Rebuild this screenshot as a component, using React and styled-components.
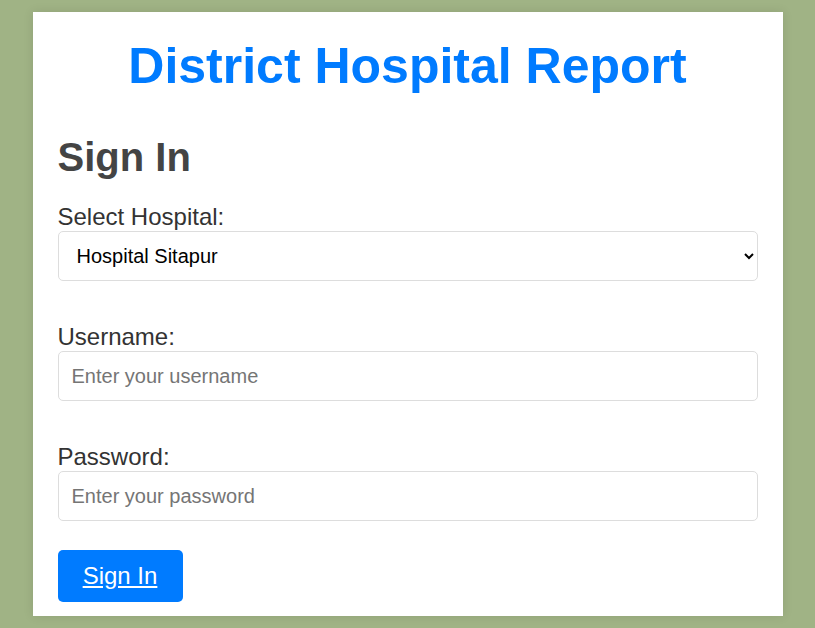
import React, { useState } from "react";
import styled, { createGlobalStyle } from "styled-components";

const GlobalStyle = createGlobalStyle`
  html, body {
    margin: 0;
    padding: 0;
    background-color: #a0b385;
    font-family: "Liberation Sans", Arial, sans-serif;
  }
`;

const Card = styled.div`
  width: 750px;
  box-sizing: border-box;
  margin: 12px auto;
  padding: 25px 25px 14px;
  background-color: #fff;
  box-shadow: 0 0 10px rgba(0, 0, 0, 0.1);
`;

const Title = styled.h1`
  margin: 0;
  text-align: center;
  color: #007bff;
  font-size: 50px;
  font-weight: bold;
  line-height: 58px;
`;

const Heading = styled.h2`
  margin: 39px 0 23px;
  color: #444;
  font-size: 40px;
  font-weight: bold;
  line-height: 46px;
`;

const Form = styled.form`
  display: flex;
  flex-direction: column;
`;

const Field = styled.div`
  display: flex;
  flex-direction: column;
  margin-bottom: 42px;
`;

const Label = styled.label`
  color: #333;
  font-size: 24px;
  line-height: 28px;
`;

const Select = styled.select`
  height: 50px;
  box-sizing: border-box;
  padding: 0 14px;
  border: 1px solid #ddd;
  border-radius: 5px;
  background: #fff;
  font-family: "Liberation Sans", Arial, sans-serif;
  font-size: 20px;
  color: #000;
`;

const Input = styled.input`
  height: 50px;
  box-sizing: border-box;
  padding: 0 13px;
  border: 1px solid #ddd;
  border-radius: 5px;
  font-family: "Liberation Sans", Arial, sans-serif;
  font-size: 20px;
  color: #000;
  &::placeholder {
    color: #757575;
  }
`;

const Button = styled.a`
  align-self: flex-start;
  display: inline-flex;
  align-items: center;
  justify-content: center;
  width: 125px;
  height: 52px;
  margin-top: -13px;
  box-sizing: border-box;
  background-color: #007bff;
  color: #fff;
  border-radius: 5px;
  font-size: 24px;
  text-decoration: underline;
  cursor: pointer;
`;

export default function App() {
  const [hospital, setHospital] = useState("sitapur");
  return (
    <>
      <GlobalStyle />
      <Card>
        <Title>District Hospital Report</Title>
        <Heading>Sign In</Heading>
        <Form onSubmit={(e) => e.preventDefault()}>
          <Field>
            <Label>Select Hospital:</Label>
            <Select value={hospital} onChange={(e) => setHospital(e.target.value)}>
              <option value="sitapur">Hospital Sitapur</option>
              <option value="lucknow">Hospital Lucknow</option>
            </Select>
          </Field>
          <Field>
            <Label>Username:</Label>
            <Input type="text" placeholder="Enter your username" />
          </Field>
          <Field>
            <Label>Password:</Label>
            <Input type="password" placeholder="Enter your password" />
          </Field>
          <Button href="#">Sign In</Button>
        </Form>
      </Card>
    </>
  );
}
